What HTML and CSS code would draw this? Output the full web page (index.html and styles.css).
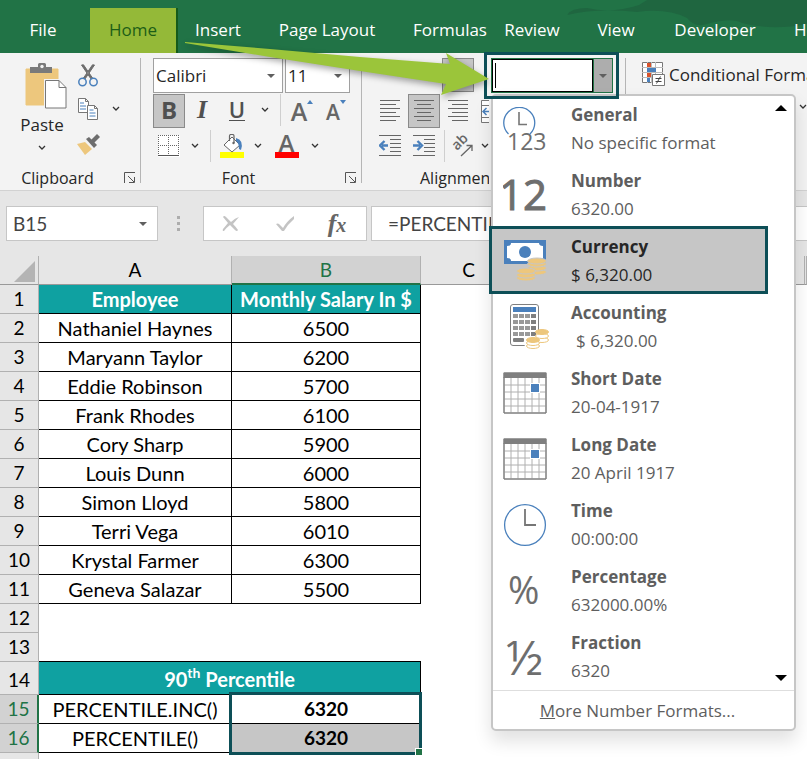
FILE: index.html
```html
<!DOCTYPE html>
<html lang="en">
<head>
<meta charset="utf-8">
<title>Percentile workbook</title>
<link rel="stylesheet" href="styles.css">
</head>
<body>
<svg class="defs" aria-hidden="true">
  <symbol id="chev" viewBox="0 0 8 6"><path d="M1 1l3 3 3-3" fill="none" stroke="#333" stroke-width="1.3"/></symbol>
  <symbol id="tri" viewBox="0 0 8 4"><path d="M0 0h8L4 4z" fill="#5f5f5f"/></symbol>
  <symbol id="launcher" viewBox="0 0 12 12"><path d="M.5 11V.5H11M4 4l6 6M10.500 5v5.500H5" fill="none" stroke="#555"/></symbol>
  <symbol id="calendar" viewBox="0 0 44 42">
    <path d="M1 5h42v36H1z" fill="#fff" stroke="#7f7f7f"/>
    <path d="M8 6v35M15 6v35M22 6v35M29 6v35M36 6v35M1 13h42M1 20h42M1 27h42M1 34h42" stroke="#b0b0b0" fill="none"/>
    <path d="M.5 .5h43V6H.5z" fill="#7f7f7f"/>
    <path d="M27 11h10v10H27z" fill="#fff"/><path d="M28 12h8v8h-8z" fill="#4a80bc"/>
    <path d="M1 1h42v40H1z" fill="none" stroke="#7f7f7f"/>
  </symbol>
</svg>
<div class="app">
  <nav class="tabs" aria-label="Ribbon tabs">
    <svg class="tabs-art" viewBox="0 0 240 53" aria-hidden="true"><path d="M0 15Q4 8 20 8Q45 14 72 5L80 0H240V24Q205 31 175 23Q165 17 140 24Q128 28 120 18Q100 8 70 12Q30 8 0 15z" fill="#1f6640"/></svg>
    <button>File</button>
    <button class="active" aria-current="page">Home</button>
    <button>Insert</button>
    <button>Page Layout</button>
    <button>Formulas</button>
    <button>Review</button>
    <button>View</button>
    <button>Developer</button>
    <button class="last">Help</button>
  </nav>

  <div class="ribbon">
    <section class="group clipboard">
      <div class="clip-body">
        <button class="paste">
          <svg width="42" height="46" viewBox="0 0 42 46"><path d="M1 6h32v36H1z" fill="#edc77d" stroke="#edc77d"/><path d="M5 4h8V1.500Q13 0 14.500 0h5Q21 0 21 1.500V4h6v6H5z" fill="#7a7a7a"/><circle cx="17" cy="3.500" r="1.700" fill="#f3f3f3"/><path d="M19 16h17l7 7v23H19z" fill="#f3f3f3"/><path d="M20.500 17.500H34l7 7V45H20.500z" fill="#fff" stroke="#777"/><path d="M34 17.500v7h7" fill="none" stroke="#777"/></svg>
          <span>Paste</span>
          <svg width="8" height="6"><use href="#chev"/></svg>
        </button>
        <div class="clip-tools">
          <button class="tool" aria-label="Cut"><svg width="20" height="23" viewBox="0 0 20 23"><path d="M3.500 1L13 15l1.500-1L5.500.8zM16.500 1L7 15l-1.500-1L14.500.8z" fill="#6d6d6d" stroke="#6d6d6d" stroke-width="1"/><circle cx="4.500" cy="18" r="3.700" fill="none" stroke="#4a80bc" stroke-width="1.500"/><circle cx="15.500" cy="18" r="3.700" fill="none" stroke="#4a80bc" stroke-width="1.500"/></svg></button>
          <div class="pair"><button class="tool" aria-label="Copy"><svg width="20" height="23" viewBox="0 0 20 23"><path d="M.5 .5h7l3 3v11H.5z" fill="#fff" stroke="#777"/><path d="M7.500.5v3h3" fill="none" stroke="#777"/><path d="M2 5h4M2 8h6M2 11h6" stroke="#4a80bc"/><path d="M9.500 7.500h7l3 3v11h-10z" fill="#fff" stroke="#777"/><path d="M16.500 7.500v3h3" fill="none" stroke="#777"/><path d="M11.500 12h4M11.500 15h6M11.500 18h6" stroke="#4a80bc"/></svg></button><button class="drop" aria-label="Copy options"><svg width="8" height="6"><use href="#chev"/></svg></button></div>
          <button class="tool" aria-label="Format Painter"><svg width="24" height="21" viewBox="0 0 24 21"><path d="M1 10l8-2 7 7-7 6z" fill="#edc77d"/><path d="M10 5l3-2 8 8-3 3z" fill="#6d6d6d"/><path d="M15 6l6-6 3 3-6 6z" fill="#6d6d6d"/></svg></button>
        </div>
      </div>
      <footer><span>Clipboard</span><button class="launch" aria-label="Clipboard settings"><svg width="12" height="12"><use href="#launcher"/></svg></button></footer>
    </section>

    <section class="group font">
      <div class="row">
        <label class="combo family"><input value="Calibri" aria-label="Font"><svg width="8" height="4"><use href="#tri"/></svg></label>
        <label class="combo size"><input value="11" aria-label="Font size"><svg width="8" height="4"><use href="#tri"/></svg></label>
      </div>
      <div class="row">
        <button class="tool on glyph" aria-label="Bold"><b>B</b></button>
        <button class="tool glyph italic" aria-label="Italic"><i>I</i></button>
        <button class="tool glyph under" aria-label="Underline"><span>U</span></button>
        <button class="drop" aria-label="Underline options"><svg width="8" height="6"><use href="#chev"/></svg></button>
        <span class="sep"></span>
        <button class="tool grow" aria-label="Increase font size">A<svg width="6" height="4" viewBox="0 0 6 4"><path d="M0 4h6L3 0z" fill="#4a80bc"/></svg></button>
        <button class="tool grow shrink" aria-label="Decrease font size">A<svg width="6" height="4" viewBox="0 0 6 4"><path d="M0 0h6L3 4z" fill="#4a80bc"/></svg></button>
      </div>
      <div class="row low">
        <button class="tool" aria-label="Borders"><svg width="22" height="22" viewBox="0 0 22 22"><path d="M0 0h22v22H0z" fill="#fff"/><path d="M.5 0v20M10.500 0v20M20.500 0v20M0 .5h21M0 10.500h21" stroke="#666" stroke-dasharray="1 1"/><path d="M0 20.500h21" stroke="#555"/></svg></button>
        <button class="drop" aria-label="Border options"><svg width="8" height="6"><use href="#chev"/></svg></button>
        <span class="sep"></span>
        <button class="tool" aria-label="Fill color"><svg width="24" height="24" viewBox="0 0 24 24"><path d="M0 18h24v6H0z" fill="#ff0"/><path d="M4 11l8-8 8 8-8 7z" fill="#fff" stroke="#666"/><path d="M9.500 7V2q0-1.500 1.500-1.500h1.500Q14 .5 14 2v7" fill="none" stroke="#666" stroke-width="1.200"/><circle cx="13.500" cy="9" r="1.200" fill="#666"/><path d="M16 4q8 2 5 12l-2-1q0-6-3-8z" fill="#4a80bc"/></svg></button>
        <button class="drop" aria-label="Fill options"><svg width="8" height="6"><use href="#chev"/></svg></button>
        <button class="tool" aria-label="Font color"><span class="font-color">A</span></button>
        <button class="drop" aria-label="Font color options"><svg width="8" height="6"><use href="#chev"/></svg></button>
      </div>
      <footer><span>Font</span><button class="launch" aria-label="Font settings"><svg width="12" height="12"><use href="#launcher"/></svg></button></footer>
    </section>

    <section class="group align">
      <div class="row end"><button class="tool on" aria-label="Bottom Align"></button></div>
      <div class="row">
        <button class="tool" aria-label="Align Left"><svg width="20" height="22" viewBox="0 0 20 22"><path d="M0 .5h20M0 4.500h16M0 8.500h20M0 12.500h16M0 16.500h20M0 20.500h16" stroke="#666"/></svg></button>
        <button class="tool on" aria-label="Center"><svg width="20" height="22" viewBox="0 0 20 22"><path d="M0 .5h20M3 4.500h14M0 8.500h20M3 12.500h14M0 16.500h20M3 20.500h14" stroke="#666"/></svg></button>
        <button class="tool" aria-label="Align Right"><svg width="20" height="22" viewBox="0 0 20 22"><path d="M0 .5h20M4 4.500h16M0 8.500h20M4 12.500h16M0 16.500h20M4 20.500h16" stroke="#666"/></svg></button>
        <button class="tool" aria-label="Merge"><svg width="22" height="23" viewBox="0 0 22 23"><path d="M.5 .5h21v22H.5zM0 5.500h22M0 17.500h22" fill="#fff" stroke="#777"/><path d="M2 11.500h8M5.500 8L2 11.500 5.500 15" fill="none" stroke="#4a80bc" stroke-width="1.500"/></svg></button>
      </div>
      <div class="row low">
        <button class="tool" aria-label="Decrease Indent"><svg width="22" height="22" viewBox="0 0 22 22"><path d="M0 .5h22M11 4.500h11M11 8.500h11M11 12.500h11M11 16.500h11M0 20.500h22" stroke="#666"/><path d="M9 10.500H3M5.500 6L1 10.500 5.500 15" fill="none" stroke="#4a80bc" stroke-width="2.400"/></svg></button>
        <button class="tool" aria-label="Increase Indent"><svg width="22" height="22" viewBox="0 0 22 22"><path d="M0 .5h22M11 4.500h11M11 8.500h11M11 12.500h11M11 16.500h11M0 20.500h22" stroke="#666"/><path d="M0 10.500h7M4.500 6L9 10.500 4.500 15" fill="none" stroke="#4a80bc" stroke-width="2.400"/></svg></button>
        <span class="sep"></span>
        <button class="tool" aria-label="Orientation"><svg class="orient" width="24" height="22" viewBox="0 0 24 22"><text class="ab" transform="rotate(-45 6 16)" x="6" y="16">ab</text><path d="M10 21L21 10.500M15.500 10.500H21V16" fill="none" stroke="#666" stroke-width="1.300"/></svg></button>
        <button class="drop" aria-label="Orientation options"><svg width="8" height="6"><use href="#chev"/></svg></button>
      </div>
      <footer><span>Alignment</span></footer>
    </section>

    <section class="group number">
      <div class="format-box">
        <div class="format-combo">
          <input aria-label="Number format"><span class="caret"></span>
          <button aria-label="Open number formats" aria-expanded="true"><svg width="8" height="4"><use href="#tri"/></svg></button>
        </div>
        <div class="menu">
          <div class="menu-list">
            <div class="items">
              <button class="item"><svg width="44" height="44" viewBox="0 0 44 44"><path d="M5.500 27A15.500 15.500 0 1 1 27 27" fill="none" stroke="#4a80bc" stroke-width="1.300"/><path d="M16 5v12.500h8" fill="none" stroke="#767676" stroke-width="1.600"/><text class="num small" x="4" y="43">123</text></svg><strong>General</strong><span>No specific format</span></button>
              <button class="item"><svg width="44" height="44" viewBox="0 0 44 44"><text class="num" x="-4" y="37">12</text></svg><strong>Number</strong><span>6320.00</span></button>
              <button class="item selected"><svg width="44" height="44" viewBox="0 0 44 44"><path d="M1 1h42v24H1z" fill="#4a80bc"/><path d="M8 4h28q0 3 4 3v12q-4 0-4 3H8q0-3-4-3V7q4 0 4-3z" fill="#fff"/><circle cx="22" cy="13" r="6" fill="#4a80bc"/><g fill="#edc77d" stroke="#c6c6c6"><ellipse cx="34" cy="33" rx="9.500" ry="3"/><ellipse cx="34" cy="29" rx="9.500" ry="3"/><ellipse cx="34" cy="25" rx="9.500" ry="3"/><ellipse cx="34" cy="22" rx="9.500" ry="3"/><ellipse cx="23" cy="39" rx="9.500" ry="3"/><ellipse cx="23" cy="36" rx="9.500" ry="3"/><ellipse cx="23" cy="32" rx="9.500" ry="3"/></g></svg><strong>Currency</strong><span>$ 6,320.00</span></button>
              <button class="item"><svg class="calc" width="46" height="46" viewBox="0 0 46 46"><rect x="7.500" y=".5" width="28" height="41" rx="2.500" fill="#fff" stroke="#7f7f7f"/><path d="M10 3h23v5H10z" fill="#4a80bc"/><path d="M12.500 10v23M18.500 10v23M24.500 10v23" stroke="#999" stroke-width="5" stroke-dasharray="4 2"/><path d="M30.500 10v23" stroke="#7f7f7f" stroke-width="5" stroke-dasharray="4 2"/><rect x="10" y="34" width="11" height="4" rx="1" fill="#7f7f7f"/><g fill="#fff" stroke="#edc77d"><ellipse cx="39" cy="36" rx="7.500" ry="2.500" stroke="#fff" stroke-width="3"/><ellipse cx="39" cy="36" rx="6.500" ry="2.500"/><ellipse cx="39" cy="32" rx="6.500" ry="2.500"/><ellipse cx="39" cy="28" rx="6.500" ry="2.500" fill="#edc77d"/><ellipse cx="30" cy="42" rx="7.500" ry="2.500" stroke="#fff" stroke-width="2"/><ellipse cx="30" cy="42" rx="6.500" ry="2.500"/><ellipse cx="30" cy="39" rx="6.500" ry="2.500"/><ellipse cx="30" cy="36" rx="6.500" ry="2.500" fill="#edc77d"/></g></svg><strong>Accounting</strong><span class="indent">$ 6,320.00</span></button>
              <button class="item"><svg width="44" height="42"><use href="#calendar"/></svg><strong>Short Date</strong><span>20-04-1917</span></button>
              <button class="item"><svg width="44" height="42"><use href="#calendar"/></svg><strong>Long Date</strong><span>20 April 1917</span></button>
              <button class="item"><svg width="44" height="44" viewBox="0 0 44 44"><circle cx="22" cy="22" r="20.400" fill="none" stroke="#4a80bc" stroke-width="1.300"/><path d="M22 6v16h11" fill="none" stroke="#767676" stroke-width="1.800"/></svg><strong>Time</strong><span>00:00:00</span></button>
              <button class="item"><svg width="44" height="44" viewBox="0 0 44 44"><text class="num sign" x="5" y="35">%</text></svg><strong>Percentage</strong><span>632000.00%</span></button>
              <button class="item"><svg width="44" height="44" viewBox="0 0 44 44"><text class="num half" x="3" y="40">½</text></svg><strong>Fraction</strong><span>6320</span></button>
            </div>
            <div class="scroller"><button aria-label="Scroll up"><svg width="12" height="6" viewBox="0 0 12 6"><path d="M0 6h12L6 0z"/></svg></button><button aria-label="Scroll down"><svg width="12" height="6" viewBox="0 0 12 6"><path d="M0 0h12L6 6z"/></svg></button></div>
          </div>
          <button class="more"><u>M</u>ore Number Formats...</button>
        </div>
      </div>
    </section>

    <section class="styles">
      <button class="conditional"><svg width="23" height="24" viewBox="0 0 23 24"><path d="M.5 .5h20v20H.5z" fill="#fff" stroke="#777"/><path d="M5.500 0v21M9.500 0v21M13.500 0v21M0 5.500h21M0 10.500h21M0 15.500h21" stroke="#bbb"/><path d="M5 1h4v4H5zM5 11h4v4H5z" fill="#d9532c"/><path d="M5 6h9v4H5zM5 16h3v4H5z" fill="#4a80bc"/><path d="M10.500 12.500h12v11h-12z" fill="#fff" stroke="#777"/><path d="M13.500 16.500h6M13.500 19.500h6M18.500 14.500l-4 7" stroke="#444"/></svg><span>Conditional Formatting</span></button>
      <button class="drop" aria-label="More styles"><svg width="8" height="6"><use href="#chev"/></svg></button>
    </section>
    <svg class="pointer" viewBox="0 0 310 66" width="310" height="66" aria-hidden="true"><path d="M1 2L86 9L176 17L266 24L262 13L305 39L257 55L262 44L176 31L86 17L1 3z" fill="#9bc53a"/></svg>
  </div>

  <div class="formula-bar">
    <label class="combo name-box"><input value="B15" aria-label="Name box"><svg width="8" height="4"><use href="#tri"/></svg></label>
    <svg class="dots" width="4" height="16" viewBox="0 0 4 16"><path d="M0 0h3v3H0zM0 6h3v3H0zM0 12h3v3H0z" fill="#adadad"/></svg>
    <div class="fx">
      <button aria-label="Cancel"><svg width="18" height="17" viewBox="0 0 18 17"><path d="M1 2Q2 0 4 2L9 7Q13 3 17 2L11 9q3 3 5 6-1 2-3 0L8 10Q4 13 2 16q-2 0-1-2L6 8z" fill="#c4c4c4"/></svg></button>
      <button aria-label="Enter"><svg width="20" height="17" viewBox="0 0 20 17"><path d="M1 9q2-1 3 0l4 4Q12 6 19 1v3Q13 9 9 16H7z" fill="#c4c4c4"/></svg></button>
      <button class="fx-sign" aria-label="Insert function"><i>f</i><i class="x">x</i></button>
    </div>
    <input class="formula" value="=PERCENTILE.INC(B2:B11,0.9)" aria-label="Formula">
  </div>

  <table class="sheet">
    <colgroup><col class="c-row"><col class="c-a"><col class="c-b"><col class="c-c"><col class="c-c"><col class="c-c"><col class="c-c"><col></colgroup>
    <thead><tr><th class="corner"><svg width="21" height="21" viewBox="0 0 21 21"><path d="M21 0v21H0z" fill="#b4b4b4"/></svg></th><th>A</th><th class="picked">B</th><th>C</th><th></th><th></th><th></th><th></th></tr></thead>
    <tbody>
      <tr class="data head"><th>1</th><td>Employee</td><td>Monthly Salary In $</td></tr>
      <tr class="data"><th>2</th><td>Nathaniel Haynes</td><td>6500</td></tr>
      <tr class="data"><th>3</th><td>Maryann Taylor</td><td>6200</td></tr>
      <tr class="data"><th>4</th><td>Eddie Robinson</td><td>5700</td></tr>
      <tr class="data"><th>5</th><td>Frank Rhodes</td><td>6100</td></tr>
      <tr class="data"><th>6</th><td>Cory Sharp</td><td>5900</td></tr>
      <tr class="data"><th>7</th><td>Louis Dunn</td><td>6000</td></tr>
      <tr class="data"><th>8</th><td>Simon Lloyd</td><td>5800</td></tr>
      <tr class="data"><th>9</th><td>Terri Vega</td><td>6010</td></tr>
      <tr class="data"><th>10</th><td>Krystal Farmer</td><td>6300</td></tr>
      <tr class="data"><th>11</th><td>Geneva Salazar</td><td>5500</td></tr>
      <tr><th>12</th><td></td><td></td></tr>
      <tr class="before"><th>13</th><td></td><td></td></tr>
      <tr class="data head tall"><th>14</th><td colspan="2">90<sup>th</sup> Percentile</td></tr>
      <tr class="data"><th class="picked">15</th><td>PERCENTILE.INC()</td><td class="result">6320<span class="selection"></span></td></tr>
      <tr class="data"><th class="picked">16</th><td>PERCENTILE()</td><td class="result shaded">6320</td></tr>
      <tr><th></th><td></td><td></td></tr>
    </tbody>
  </table>
</div>
</body>
</html>
```
FILE: styles.css
```css
* { box-sizing: border-box; }
body { margin: 0; background: #fff; font-family: "Open Sans", "Noto Sans", sans-serif; font-size: 17px; color: #262626; }
button, input { font: inherit; color: inherit; margin: 0; padding: 0; border: 0; background: none; }
input { min-width: 0; outline: 0; }
svg { display: block; flex: none; }
.defs { position: absolute; width: 0; height: 0; }
.app { height: 100vh; overflow: hidden; }

/* Tabs */
.tabs { position: relative; display: grid; grid-template-columns: 90px 88px 80px 138px 108px 56px 112px 86px 1fr; height: 53px; padding-top: 8px; background: #217346; color: #fff; overflow: hidden; }
.tabs button { position: relative; min-width: 0; padding-bottom: 2px; white-space: nowrap; }
.tabs button:first-of-type { padding-right: 4px; }
.tabs .active { background: #94b938; color: #1d5e17; border-right: 2px solid #145a1a; }
.tabs .last { padding-left: 36px; text-align: left; }
.tabs-art { position: absolute; right: 0; top: 0; width: 240px; }

/* Ribbon */
.ribbon { position: relative; display: flex; height: 138px; background: #f3f3f3; border-bottom: 1px solid #d2d2d2; }
.group { position: relative; flex: none; display: flex; flex-direction: column; padding-top: 5px; }
.group::after { content: ""; position: absolute; right: 0; top: 5px; bottom: 7px; width: 1px; background: #b5b5b5; }
.group footer { display: flex; align-items: center; justify-content: center; height: 24px; margin-top: auto; font-size: 16px; }
.group .launch { position: absolute; right: 5px; bottom: 6px; }
.row { display: flex; height: 35px; }
.row + .row { margin-top: 1px; }
.row.low { height: 32px; }
.tool { display: flex; align-items: center; justify-content: center; width: 32px; height: 34px; }
.low .tool { height: 32px; }
.tool.on { background: #c6c6c6; border: 1px solid #8a8a8a; }
.drop { display: flex; align-items: center; justify-content: center; width: 20px; height: 32px; }
.sep { width: 1px; height: 32px; margin: 0 5px; background: #cfcfcf; }

.clipboard { width: 141px; }
.clip-body { display: flex; padding: 4px 0 0 17px; }
.paste { display: flex; flex-direction: column; align-items: center; width: 50px; height: 90px; }
.paste > svg:first-child { margin-left: 8px; margin-top: 1px; }
.paste > span { line-height: 32px; margin-bottom: 4px; }
.clip-tools { margin-left: 5px; }
.clip-tools .tool { height: 26px; }
.clip-tools .pair { display: flex; align-items: center; margin: 8px 0 9px; }
.clip-tools .pair .drop { width: 24px; height: 26px; }
.clipboard footer { padding-right: 26px; }

.font { width: 221px; padding-left: 12px; }
.combo { display: flex; align-items: center; height: 35px; background: #fff; border: 1px solid #a0a0a0; }
.combo input { flex: 1; padding-left: 2px; }
.combo svg { margin-right: 7px; }
.family { width: 130px; margin-right: 2px; }
.size { width: 65px; }
.glyph { font-size: 24px; line-height: 30px; color: #505050; padding-bottom: 3px; }
.italic { width: 34px; font-family: "Liberation Serif", serif; font-weight: 700; font-size: 26px; }
.under { width: 36px; font-weight: 600; font-size: 22px; }
.under span { line-height: 22px; height: 23px; border-bottom: 1px solid #505050; }
.grow { align-items: flex-start; width: 32px; font-size: 25px; font-weight: 600; line-height: 34px; color: #666; }
.grow svg { margin-top: 6px; }
.shrink { width: 36px; font-size: 21px; line-height: 36px; }
.font-color { width: 24px; height: 24px; border-bottom: 6px solid #f00; font-size: 24px; font-weight: 600; line-height: 18px; color: #666; }
.low .drop + .tool { width: 37px; }
.font footer { padding-right: 38px; }

.align { width: 127px; padding-left: 13px; overflow: hidden; margin-right: -5px; }
.align::after { display: none; }
.align .tool { flex: none; margin-right: 2px; margin-left: -1px; }
.align .tool + .tool { margin-left: 0; }
.align .end { padding-left: 68px; }
.align .sep { margin: 0 3px 0 2px; flex: none; }
.align footer { padding-left: 39px; justify-content: flex-start; margin-left: 6px; }
.align .drop { flex: none; width: 8px; }
.ab { font-size: 14px; font-weight: 600; fill: #666; }

.number { width: 142px; padding-top: 0; z-index: 3; }
.format-box { position: relative; z-index: 1; width: 135px; height: 47px; margin-top: -1px; padding: 6px 6px 6px 7px; background: #f3f3f3; }
.format-box::after { content: ""; position: absolute; inset: 0; border: 3px solid #0d4f57; pointer-events: none; }
.format-combo { position: relative; display: flex; height: 35px; border: 1px solid #217346; }
.format-combo input { flex: 1; width: 0; background: #fff; border: 1px solid #000; padding-left: 4px; }
.format-combo button { display: flex; align-items: center; justify-content: center; width: 19px; background: #adadad; border-left: 1px solid #217346; }
.caret { position: absolute; left: 3px; top: 4px; bottom: 4px; width: 1px; background: #000; }

/* Number format menu */
.menu { position: absolute; left: 7px; top: 42px; width: 305px; background: #fff; border: 2px solid #c6c6c6; border-radius: 5px; color: #5e5e5e; box-shadow: 0 10px 18px rgba(0, 0, 0, .12); }
.menu-list { display: flex; }
.items { flex: 1; }
.item { position: relative; display: grid; grid-template-columns: 68px 1fr; grid-template-rows: 28px 28px; align-items: center; width: 100%; height: 66px; padding: 5px 0 5px 10px; text-align: left; line-height: 28px; }
.item svg { grid-row: 1 / 3; }
.item strong { font-weight: 700; }
.item .indent { padding-left: 5px; }
.selected { background: #c6c6c6; color: #262626; }
.selected::after { content: ""; position: absolute; inset: -2px 0 0 -4px; border: 3px solid #0d4f57; }
.scroller { display: flex; flex-direction: column; justify-content: space-between; align-items: center; width: 26px; padding: 9px 0; }
.more { display: block; width: 100%; height: 39px; border-top: 1px solid #dedede; padding-right: 12px; }
.num { font-size: 42px; fill: #6e6e6e; stroke: #6e6e6e; stroke-width: 1px; }
.small { font-size: 23px; stroke-width: 0; }
.sign { font-size: 38px; stroke-width: 0; }
.half { font-size: 48px; stroke-width: 0; }

.styles { flex: 1; min-width: 0; overflow: hidden; padding: 4px 0 0 16px; }
.conditional { display: flex; align-items: center; gap: 4px; height: 34px; white-space: nowrap; }
.styles > .drop { margin-left: auto; width: 8px; height: 32px; }
.pointer { position: absolute; left: 184px; top: -13px; z-index: 4; filter: drop-shadow(1px 3px 3px rgba(0, 0, 0, .35)); }

/* Formula bar */
.formula-bar { display: flex; align-items: center; padding: 15px 0 15px 6px; background: #e6e6e6; color: #444; font-family: Lato, "Open Sans", sans-serif; font-size: 19px; }
.name-box { width: 152px; border-color: #c6c6c6; }
.name-box input { padding-left: 6px; }
.name-box svg { margin-right: 10px; }
.dots { margin: 0 22px 0 19px; }
.fx { display: flex; align-items: center; width: 164px; height: 35px; margin-right: 4px; background: #fff; border: 1px solid #c6c6c6; }
.fx button { display: flex; align-items: center; justify-content: center; width: 54px; height: 33px; }
.fx .fx-sign { font-family: "Liberation Serif", serif; font-size: 26px; font-weight: 700; color: #666; padding-right: 4px; }
.fx-sign .x { font-size: 20px; padding-top: 3px; }
.formula { flex: 1; height: 35px; padding-left: 16px; background: #fff; border: 1px solid #c6c6c6; border-right: 0; }

/* Sheet */
.sheet { width: 100%; table-layout: fixed; border-collapse: separate; border-spacing: 0; font-family: Lato, "Open Sans", sans-serif; font-size: 20px; color: #000; text-align: center; }
.c-row { width: 39px; }
.c-a { width: 193px; }
.c-b { width: 189px; }
.c-c { width: 96px; }
.sheet th, .sheet td { height: 29px; padding: 0; line-height: 28px; white-space: nowrap; }
.sheet th { font-size: 19px; font-weight: 400; background: #e6e6e6; border-right: 1px solid #b1b1b1; border-bottom: 1px solid #b1b1b1; }
.sheet thead th { border-bottom-color: #999; }
.sheet thead th.picked { line-height: 27px; background: #d2d2d2; color: #217346; border-bottom: 2px solid #217346; }
.sheet tbody th.picked { background: #d2d2d2; color: #217346; border-right: 2px solid #217346; }
.corner svg { margin: 2px 3px 0 auto; }
.data td { border-right: 1px solid #000; border-bottom: 1px solid #000; }
.before td { border-bottom: 1px solid #000; }
.before td ~ td ~ td { border: 0; }
.head td { background: #0fa1a1; color: #fff; font-weight: 700; }
.sheet .tall td, .sheet .tall th { height: 33px; line-height: 32px; padding-top: 3px; line-height: 29px; }
sup { font-size: 14px; line-height: 0; vertical-align: 9px; }
.result { position: relative; font-weight: 700; }
.sheet .result { font-size: 19px; }
.shaded { background: #c6c6c6; }
.selection { position: absolute; left: -3px; top: -3px; right: -2px; height: 63px; border: 3px solid #0d4f57; z-index: 1; }
.selection::after { content: ""; position: absolute; right: -3px; bottom: -3px; width: 6px; height: 6px; background: #217346; border: 1px solid #fff; border-width: 1px 0 0 1px; }
```
